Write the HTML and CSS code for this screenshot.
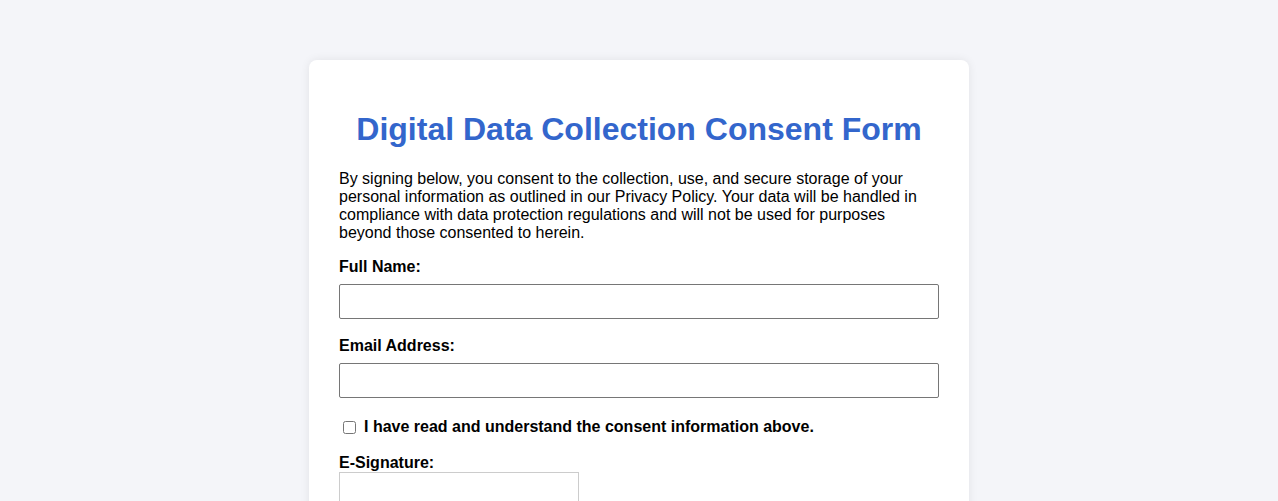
FILE: index.html
```html
<!DOCTYPE html>
<html lang="en">
<head>
<meta charset="utf-8">
<title>Digital Data Collection Consent Form</title>
<link rel="stylesheet" href="styles.css">
</head>
<body>
<div class="card">
  <h1 class="title">Digital Data Collection Consent Form</h1>
  <p class="intro">By signing below, you consent to the collection, use, and secure storage of your personal information as outlined in our Privacy Policy. Your data will be handled in compliance with data protection regulations and will not be used for purposes beyond those consented to herein.</p>
  <form class="form">
    <label class="field-label" for="name">Full Name:</label>
    <input class="text-input" type="text" id="name">
    <label class="field-label" for="email">Email Address:</label>
    <input class="text-input" type="email" id="email">
    <label class="check-label"><input class="check" type="checkbox"> I have read and understand the consent information above.</label>
    <label class="sig-label">E-Signature:</label>
    <div class="sig-box"></div>
  </form>
</div>
</body>
</html>
```
FILE: styles.css
```css
html, body {
  margin: 0;
  padding: 0;
}
body {
  background: #f4f5f9;
  font-family: "Liberation Sans", Arial, sans-serif;
  color: #000;
  padding-top: 60px;
}
.card {
  width: 600px;
  margin: 0 auto;
  background: #fff;
  border-radius: 8px;
  padding: 30px;
  box-shadow: 0 0 10px rgba(0, 0, 0, 0.08);
  min-height: 500px;
}
.title {
  font-size: 32px;
  font-weight: bold;
  color: #3366cc;
  text-align: center;
  margin: 21px 0 22px;
}
.intro {
  font-size: 16px;
  line-height: 18px;
  margin: 0 0 16px;
}
.form {
  display: flex;
  flex-direction: column;
  align-items: flex-start;
}
.field-label {
  display: block;
  font-weight: bold;
  font-size: 16px;
  line-height: 18px;
  margin-bottom: 8px;
}
.text-input {
  width: 100%;
  box-sizing: border-box;
  height: 35px;
  padding: 8px;
  border: 1px solid #767676;
  border-radius: 2px;
  font-size: 13.333px;
  font-family: "Liberation Sans", Arial, sans-serif;
  margin: 0 0 18px;
}
.check-label {
  display: flex;
  align-items: center;
  font-weight: bold;
  font-size: 16px;
  line-height: 18px;
  margin-top: 2px;
  margin-bottom: 18px;
}
.check {
  width: 13px;
  height: 13px;
  margin: 0 8px 0 4px;
}
.sig-label {
  font-weight: bold;
  font-size: 16px;
  line-height: 18px;
  margin-bottom: 0;
}
.sig-box {
  width: 238px;
  height: 100px;
  border: 1px solid #cccccc;
}
```
